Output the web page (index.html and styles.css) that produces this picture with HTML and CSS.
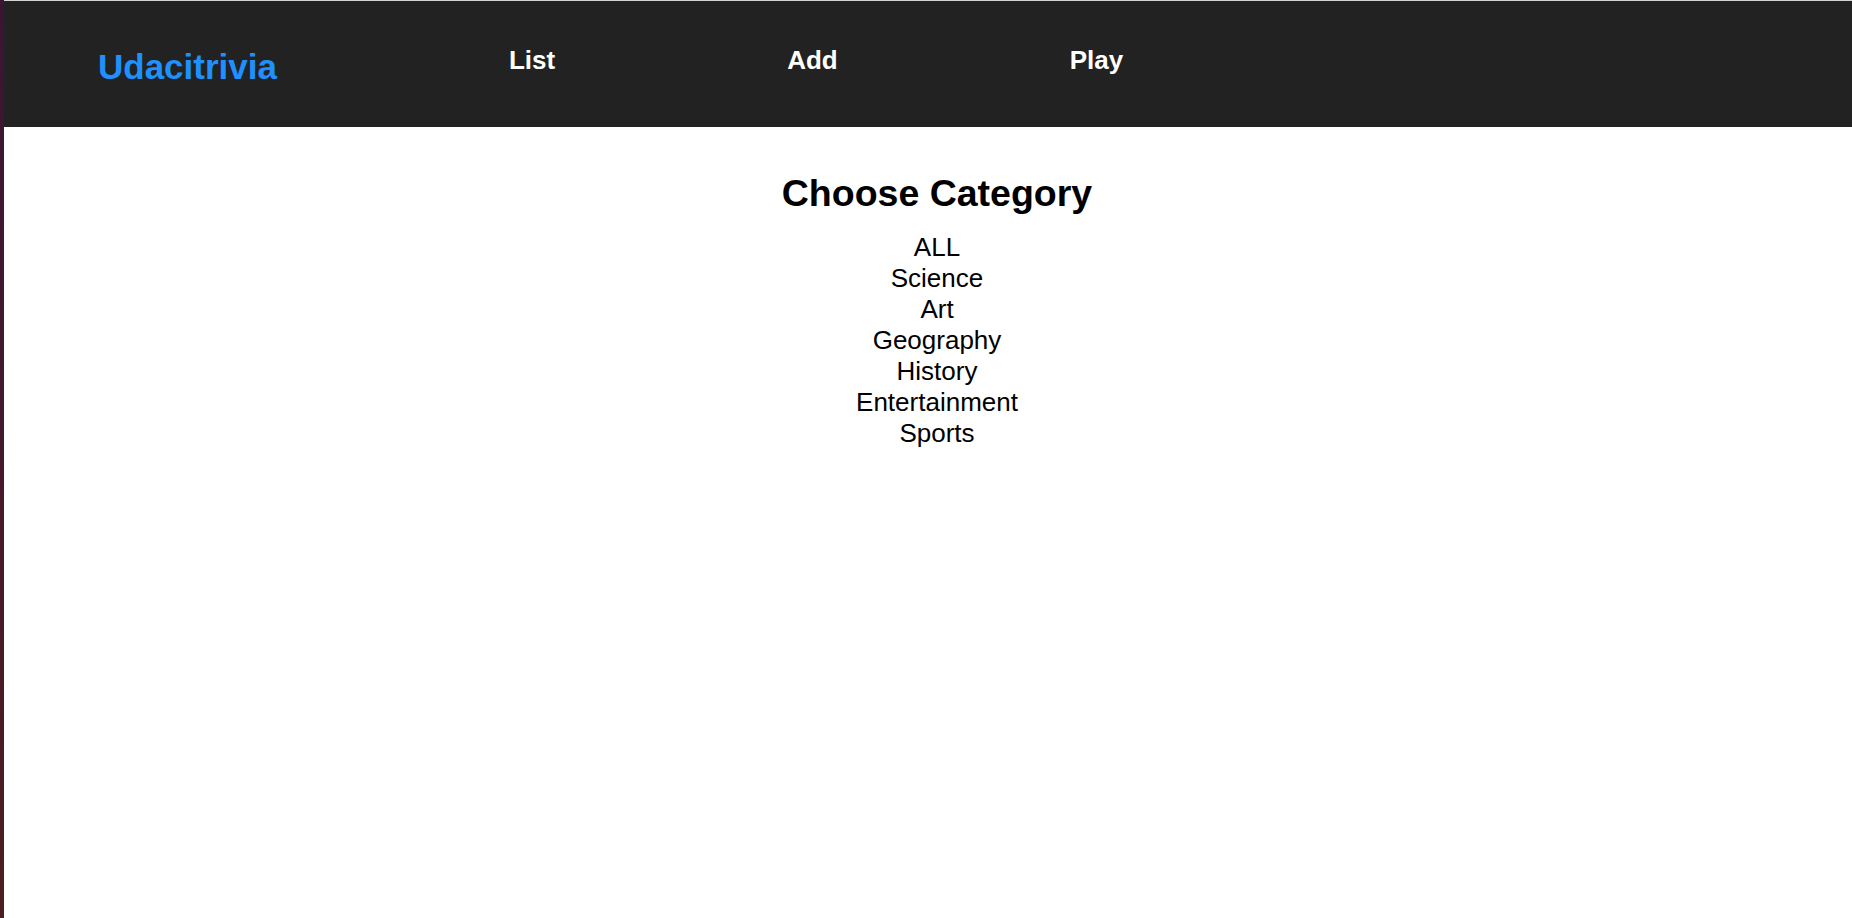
FILE: index.html
```html
<!DOCTYPE html>
<html lang="en">
<head>
<meta charset="utf-8">
<title>Udacitrivia</title>
<link rel="stylesheet" href="styles.css">
</head>
<body>
<div class="desktop">
  <div class="edge"></div>
  <div class="app">
    <header class="app-header">
      <h1 class="logo">Udacitrivia</h1>
      <nav class="nav">
        <h2 class="nav-item">List</h2>
        <h2 class="nav-item">Add</h2>
        <h2 class="nav-item">Play</h2>
      </nav>
    </header>
    <main class="quiz-play">
      <h2 class="choose-header">Choose Category</h2>
      <div class="category-list">
        <div class="category">ALL</div>
        <div class="category">Science</div>
        <div class="category">Art</div>
        <div class="category">Geography</div>
        <div class="category">History</div>
        <div class="category">Entertainment</div>
        <div class="category">Sports</div>
      </div>
    </main>
  </div>
</div>
</body>
</html>
```

FILE: styles.css
```css
html, body {
  margin: 0;
  padding: 0;
  height: 100%;
}

body {
  font-family: "Liberation Sans", Arial, sans-serif;
  background: #ffffff;
  overflow: hidden;
}

.desktop {
  display: flex;
  height: 918px;
}

.edge {
  width: 4px;
  flex: 0 0 4px;
  background: linear-gradient(to bottom, #3a1532 0%, #45192c 50%, #4b1e1f 100%);
}

.app {
  flex: 1;
  display: flex;
  flex-direction: column;
  border-top: 1px solid #d4d4d4;
  background: #ffffff;
}

.app-header {
  background: #222222;
  height: 126px;
  box-sizing: border-box;
  padding: 45px 0 0 94px;
  display: flex;
  align-items: flex-start;
  gap: 232px;
}

.logo {
  margin: 1px 0 0;
  font-size: 35px;
  font-weight: bold;
  color: #1e90ff;
  line-height: normal;
}

.nav {
  display: flex;
  align-items: flex-start;
  gap: 232px;
}

.nav-item {
  margin: -1px 0 0;
  font-size: 26px;
  font-weight: bold;
  color: #ffffff;
  line-height: normal;
}

.quiz-play {
  padding-left: 18px;
  text-align: center;
  color: #000000;
}

.choose-header {
  margin: 45px 0 17px;
  font-size: 37.5px;
  font-weight: bold;
  line-height: normal;
}

.category-list {
  display: flex;
  flex-direction: column;
  align-items: center;
}

.category {
  font-size: 26px;
  line-height: normal;
}
```
